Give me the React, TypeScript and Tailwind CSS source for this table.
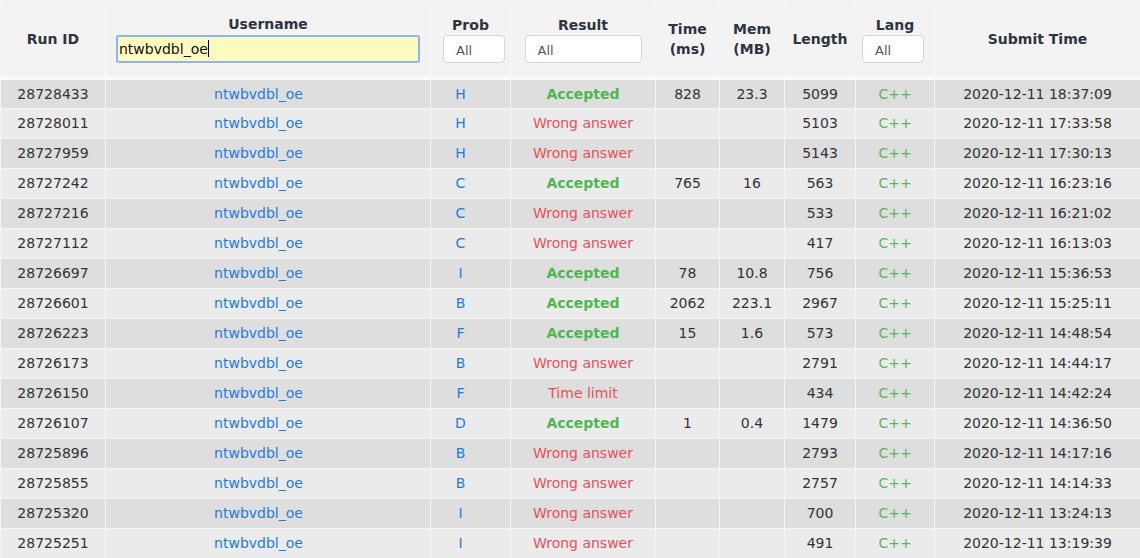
import React from "react";

type Row = {
  id: string;
  prob: string;
  result: string;
  time: string;
  mem: string;
  len: string;
  at: string;
};

const rows: Row[] = [
  { id: "28728433", prob: "H", result: "Accepted", time: "828", mem: "23.3", len: "5099", at: "2020-12-11 18:37:09" },
  { id: "28728011", prob: "H", result: "Wrong answer", time: "", mem: "", len: "5103", at: "2020-12-11 17:33:58" },
  { id: "28727959", prob: "H", result: "Wrong answer", time: "", mem: "", len: "5143", at: "2020-12-11 17:30:13" },
  { id: "28727242", prob: "C", result: "Accepted", time: "765", mem: "16", len: "563", at: "2020-12-11 16:23:16" },
  { id: "28727216", prob: "C", result: "Wrong answer", time: "", mem: "", len: "533", at: "2020-12-11 16:21:02" },
  { id: "28727112", prob: "C", result: "Wrong answer", time: "", mem: "", len: "417", at: "2020-12-11 16:13:03" },
  { id: "28726697", prob: "I", result: "Accepted", time: "78", mem: "10.8", len: "756", at: "2020-12-11 15:36:53" },
  { id: "28726601", prob: "B", result: "Accepted", time: "2062", mem: "223.1", len: "2967", at: "2020-12-11 15:25:11" },
  { id: "28726223", prob: "F", result: "Accepted", time: "15", mem: "1.6", len: "573", at: "2020-12-11 14:48:54" },
  { id: "28726173", prob: "B", result: "Wrong answer", time: "", mem: "", len: "2791", at: "2020-12-11 14:44:17" },
  { id: "28726150", prob: "F", result: "Time limit", time: "", mem: "", len: "434", at: "2020-12-11 14:42:24" },
  { id: "28726107", prob: "D", result: "Accepted", time: "1", mem: "0.4", len: "1479", at: "2020-12-11 14:36:50" },
  { id: "28725896", prob: "B", result: "Wrong answer", time: "", mem: "", len: "2793", at: "2020-12-11 14:17:16" },
  { id: "28725855", prob: "B", result: "Wrong answer", time: "", mem: "", len: "2757", at: "2020-12-11 14:14:33" },
  { id: "28725320", prob: "I", result: "Wrong answer", time: "", mem: "", len: "700", at: "2020-12-11 13:24:13" },
  { id: "28725251", prob: "I", result: "Wrong answer", time: "", mem: "", len: "491", at: "2020-12-11 13:19:39" },
];

const th = "border border-[#f7f7f7] px-0 align-middle text-center font-bold text-[#2e3440]";
const td = "border border-[#f4f4f4] h-[30px] p-0 text-center align-middle";
const box =
  "h-[28px] w-[62px] rounded-[4px] border border-[#d6d6d6] bg-white pl-[12px] text-left text-[13px] font-normal leading-[30px] text-[#555]";

export default function App() {
  return (
    <div className="h-[558px] w-[1140px] overflow-hidden bg-[#f3f3f3] font-['DejaVu_Sans','Verdana',sans-serif] text-[14px] text-[#333]">
      <table className="w-[1140px] table-fixed border-collapse">
        <colgroup>
          <col className="w-[105px]" />
          <col className="w-[325px]" />
          <col className="w-[80px]" />
          <col className="w-[145px]" />
          <col className="w-[64px]" />
          <col className="w-[65px]" />
          <col className="w-[71px]" />
          <col className="w-[79px]" />
          <col className="w-[206px]" />
        </colgroup>
        <thead>
          <tr className="border-b-[3px] border-[#fafafa] bg-[#f3f3f3]">
            <th className={th}>Run ID</th>
            <th className={`${th} pt-[13px] pb-[14px]`}>
              <div className="leading-[20px]">Username</div>
              <div className="mx-auto mt-px h-[28px] w-[304px] rounded-[3px] border-2 border-[#8fb4ee] bg-[#fbfbc0] pl-[1px] text-left text-[14px] font-normal leading-[24px] text-[#111]">
                ntwbvdbl_oe<span className="inline-block h-[17px] w-px translate-y-[3px] bg-black" />
              </div>
            </th>
            <th className={`${th} pt-[13px] pb-[14px]`}>
              <div className="leading-[20px]">Prob</div>
              <div className={`ml-[12px] ${box}`}>All</div>
            </th>
            <th className={`${th} pt-[13px] pb-[14px]`}>
              <div className="leading-[20px]">Result</div>
              <div className={`mx-auto ${box} w-[117px]`}>All</div>
            </th>
            <th className={`${th} leading-[20px]`}>
              Time
              <br />
              (ms)
            </th>
            <th className={`${th} leading-[20px]`}>
              Mem
              <br />
              (MB)
            </th>
            <th className={th}>Length</th>
            <th className={`${th} pt-[13px] pb-[14px]`}>
              <div className="leading-[20px]">Lang</div>
              <div className={`ml-[6px] ${box}`}>All</div>
            </th>
            <th className={th}>Submit Time</th>
          </tr>
        </thead>
        <tbody>
          {rows.map((r, i) => (
            <tr key={r.id} className={i % 2 === 0 ? "bg-[#dedede]" : "bg-[#ebebeb]"}>
              <td className={td}>{r.id}</td>
              <td className={`${td} pr-[19px] text-[#1e7be0]`}>ntwbvdbl_oe</td>
              <td className={`${td} pr-[20px] text-[#1e7be0]`}>{r.prob}</td>
              <td
                className={
                  r.result === "Accepted"
                    ? `${td} font-bold text-[#4db850]`
                    : `${td} text-[#e8505a]`
                }
              >
                {r.result}
              </td>
              <td className={td}>{r.time}</td>
              <td className={td}>{r.mem}</td>
              <td className={td}>{r.len}</td>
              <td className={`${td} text-[#58b65a]`}>C++</td>
              <td className={td}>{r.at}</td>
            </tr>
          ))}
        </tbody>
      </table>
    </div>
  );
}
